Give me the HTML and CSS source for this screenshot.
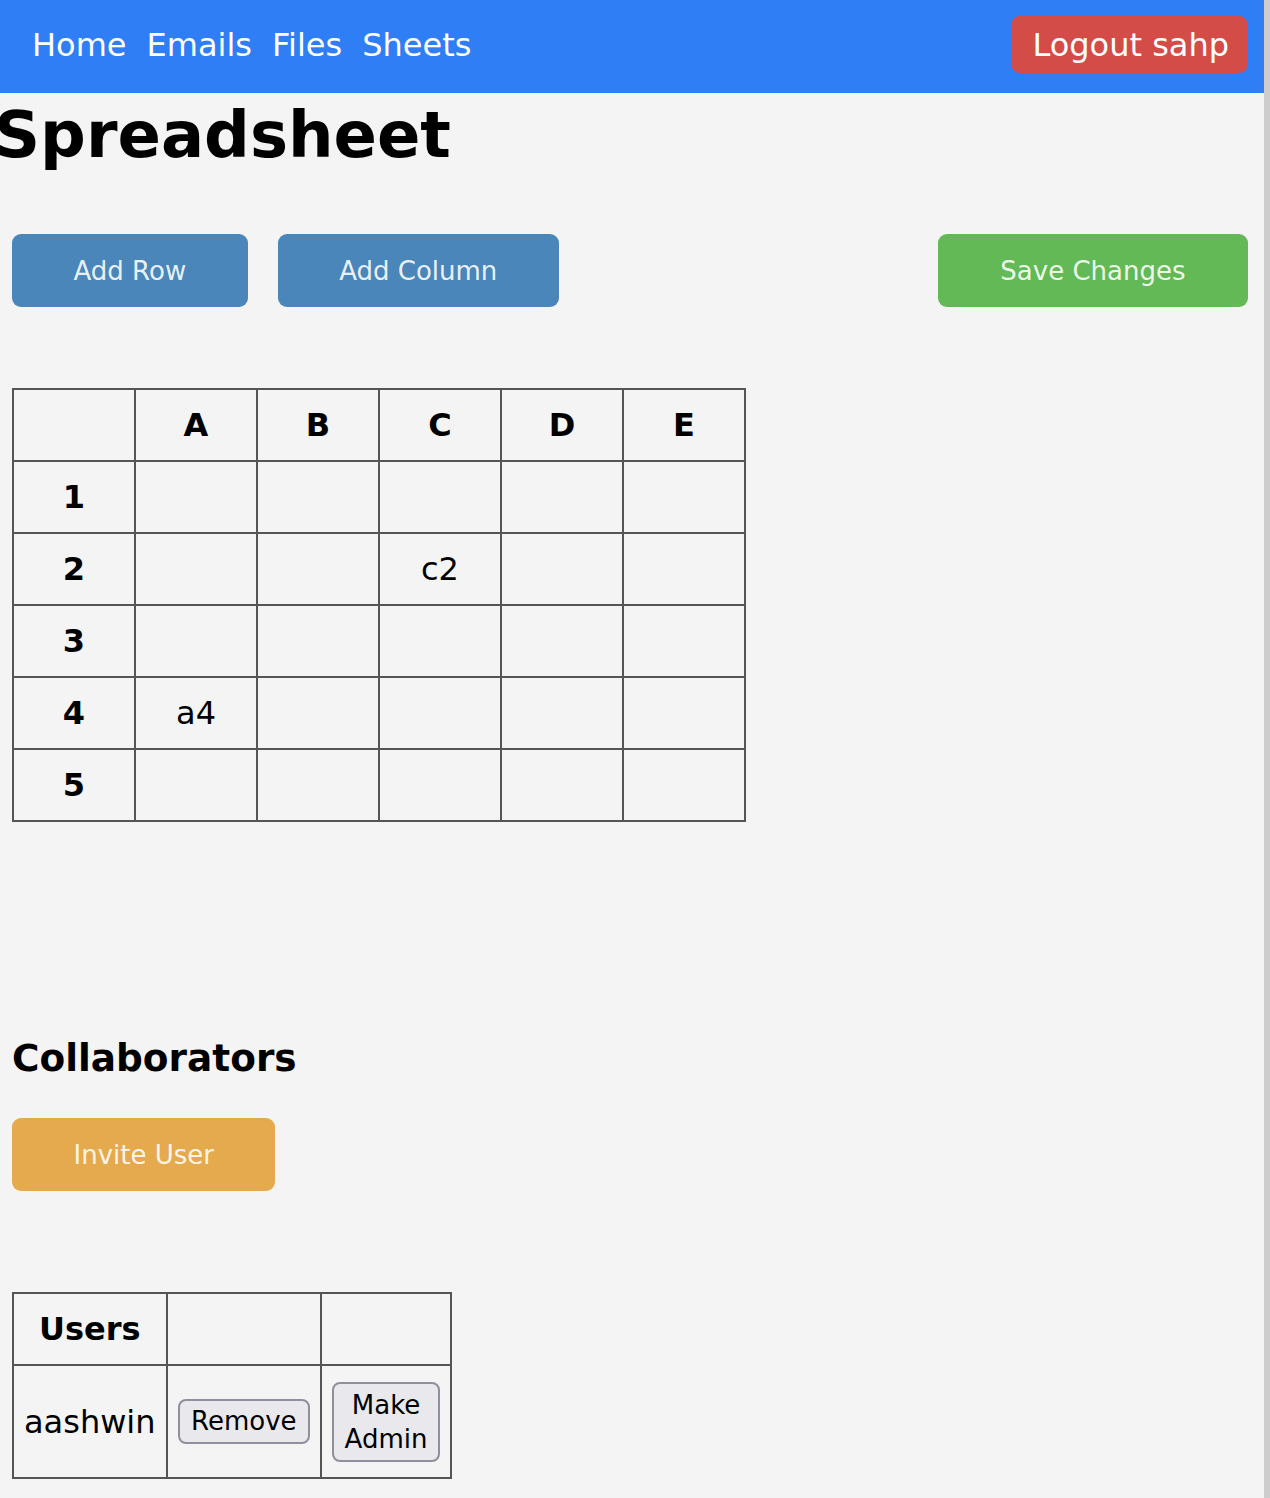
FILE: index.html
```html
<!DOCTYPE html>
<html>
<head>
<meta charset="utf-8">
<title>Spreadsheet</title>
<link rel="stylesheet" href="styles.css">
</head>
<body>
<nav class="nav">
  <div class="nav-links">
    <a class="nav-link" href="#">Home</a>
    <a class="nav-link" href="#">Emails</a>
    <a class="nav-link" href="#">Files</a>
    <a class="nav-link" href="#">Sheets</a>
  </div>
  <button class="btn btn-logout">Logout sahp</button>
</nav>

<h1 class="title">Spreadsheet</h1>

<div class="toolbar">
  <button class="btn btn-action btn-blue">Add Row</button>
  <button class="btn btn-action btn-blue">Add Column</button>
  <button class="btn btn-action btn-green">Save Changes</button>
</div>

<table class="sheet">
  <tr><th></th><th>A</th><th>B</th><th>C</th><th>D</th><th>E</th></tr>
  <tr><th>1</th><td></td><td></td><td></td><td></td><td></td></tr>
  <tr><th>2</th><td></td><td></td><td>c2</td><td></td><td></td></tr>
  <tr><th>3</th><td></td><td></td><td></td><td></td><td></td></tr>
  <tr><th>4</th><td>a4</td><td></td><td></td><td></td><td></td></tr>
  <tr><th>5</th><td></td><td></td><td></td><td></td><td></td></tr>
</table>

<h3 class="section-title">Collaborators</h3>

<div class="invite-row">
  <button class="btn btn-action btn-orange">Invite User</button>
</div>

<table class="users">
  <tr class="users-head"><th>Users</th><th></th><th></th></tr>
  <tr class="users-row">
    <td>aashwin</td>
    <td><button class="native-btn">Remove</button></td>
    <td><button class="native-btn native-btn-wrap">Make Admin</button></td>
  </tr>
</table>
</body>
</html>
```

FILE: styles.css
```css
html {
  background: #cdcdcd;
}

body {
  margin: 0;
  width: 1264px;
  min-height: 1498px;
  background: #f4f4f4;
  font-family: "DejaVu Sans", "Liberation Sans", sans-serif;
  color: #000;
}

.nav {
  display: flex;
  align-items: center;
  justify-content: space-between;
  background: #2f7ef5;
  padding: 16px 16px 20px 32px;
}

.nav-links {
  display: flex;
  gap: 20px;
}

.nav-link {
  color: #fff;
  text-decoration: none;
  font-size: 32px;
  line-height: 37px;
  position: relative;
  top: 1px;
}

.btn {
  font-family: "DejaVu Sans", "Liberation Sans", sans-serif;
  border: none;
  cursor: pointer;
}

.btn-logout {
  background: #d34c47;
  color: #fff;
  font-size: 32px;
  height: 57px;
  padding: 0 19px 0 21px;
  border-radius: 9px;
}

.title {
  font-size: 64px;
  font-weight: bold;
  line-height: 74px;
  margin: 5px 0 0 -6px;
}

.toolbar {
  display: flex;
  gap: 30px;
  padding: 0 16px 0 12px;
  margin-top: 62px;
}

.btn-action {
  font-size: 26px;
  height: 73px;
  padding: 0 61.5px;
  border-radius: 9px;
  color: rgba(255, 255, 255, 0.9);
}

.btn-blue {
  background: #4a86b9;
}

.btn-green {
  background: #62b955;
  margin-left: auto;
  padding: 0 62.5px;
}

.btn-orange {
  background: #e5aa4d;
}

.sheet {
  border-collapse: collapse;
  table-layout: fixed;
  margin: 81px 0 0 12px;
}

.sheet th,
.sheet td {
  border: 2px solid #555;
  width: 120px;
  height: 70px;
  padding: 0;
  text-align: center;
  font-size: 32px;
}

.sheet th {
  font-weight: bold;
}

.sheet td {
  font-weight: normal;
}

.section-title {
  font-size: 37.44px;
  font-weight: bold;
  line-height: 44px;
  margin: 214px 0 0 12px;
}

.invite-row {
  display: flex;
  padding-left: 12px;
  margin-top: 38px;
}

.users {
  border-collapse: collapse;
  margin: 101px 0 0 12px;
}

.users th,
.users td {
  border: 2px solid #555;
  padding: 0 10px;
  text-align: center;
  font-size: 32px;
}

.users-head th {
  height: 70px;
}

.users-row td {
  height: 111px;
}

.native-btn {
  font-family: "DejaVu Sans", "Liberation Sans", sans-serif;
  font-size: 26px;
  line-height: 31px;
  padding: 5px 11.5px;
  background: #e9e9ed;
  color: #000;
  border: 2px solid #8f8f9d;
  border-radius: 8px;
}

.native-btn-wrap {
  width: 108px;
  line-height: 34px;
  padding: 4px 8px;
  white-space: normal;
}
```
